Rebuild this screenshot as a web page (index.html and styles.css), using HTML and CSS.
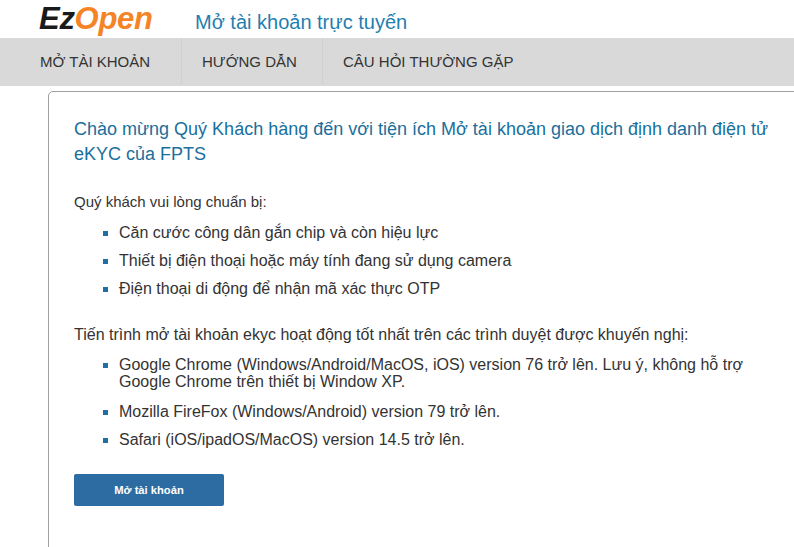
FILE: index.html
```html
<!DOCTYPE html>
<html lang="vi">
<head>
    <meta charset="UTF-8">
    <meta name="viewport" content="width=device-width, initial-scale=1.0">
    <title>Mở tài khoản trực tuyến</title>
    <link rel="stylesheet" href="styles.css">
</head>
<body>
    <div class="header">
        <div class="logo"><span class="logo-dark">Ez</span><span class="logo-orange">Open</span></div>
        <div class="site-title">Mở tài khoản trực tuyến</div>
    </div>

    <div class="nav">
        <a class="nav-item nav-first">MỞ TÀI KHOẢN</a>
        <a class="nav-item nav-second">HƯỚNG DẪN</a>
        <a class="nav-item nav-third">CÂU HỎI THƯỜNG GẶP</a>
    </div>

    <div class="card">
        <h2 class="card-title">Chào mừng Quý Khách hàng đến với tiện ích Mở tài khoản giao dịch định danh điện tử eKYC của FPTS</h2>

        <p class="intro">Quý khách vui lòng chuẩn bị:</p>
        <ul class="list list-prepare">
            <li>Căn cước công dân gắn chip và còn hiệu lực</li>
            <li>Thiết bị điện thoại hoặc máy tính đang sử dụng camera</li>
            <li>Điện thoại di động để nhận mã xác thực OTP</li>
        </ul>

        <p class="intro intro-browsers">Tiến trình mở tài khoản ekyc hoạt động tốt nhất trên các trình duyệt được khuyến nghị:</p>
        <ul class="list list-browsers">
            <li>Google Chrome (Windows/Android/MacOS, iOS) version 76 trở lên. Lưu ý, không hỗ trợ Google Chrome trên thiết bị Window XP.</li>
            <li>Mozilla FireFox (Windows/Android) version 79 trở lên.</li>
            <li>Safari (iOS/ipadOS/MacOS) version 14.5 trở lên.</li>
        </ul>

        <button class="open-button">Mở tài khoản</button>
    </div>
</body>
</html>
```

FILE: styles.css
```css
* {
    margin: 0;
    padding: 0;
    box-sizing: border-box;
    font-family: "Liberation Sans", Arial, sans-serif;
}

html, body {
    height: 547px;
    overflow: hidden;
}

body {
    background-color: #ffffff;
    color: #333333;
    font-size: 15px;
}

.header {
    display: flex;
    align-items: center;
    height: 38px;
    padding-left: 39px;
}

.logo {
    width: 156px;
    font-size: 31px;
    font-weight: bold;
    font-style: italic;
    letter-spacing: -0.3px;
}

.logo-dark { color: #1a1a1a; }
.logo-orange { color: #f58426; }

.site-title {
    color: #1f7fb0;
    font-size: 20px;
    margin-top: 6px;
}

.nav {
    display: flex;
    height: 48px;
    padding-bottom: 2px;
    background-color: #d9d9d9;
}

.nav-item {
    display: flex;
    align-items: center;
    color: #333333;
    font-size: 15px;
    border-right: 1px solid #d0d0d0;
}

.nav-first {
    width: 182px;
    padding-left: 40px;
}

.nav-second {
    width: 141px;
    padding-left: 20px;
}

.nav-third {
    padding-left: 20px;
    border-right: none;
}

.card {
    width: 780px;
    height: 480px;
    margin: 5px 0 0 48px;
    padding: 25px 0 0 25px;
    border: 1px solid #a0a0a0;
    border-radius: 5px;
}

.card-title {
    color: #1a6f9c;
    font-size: 18px;
    font-weight: normal;
    line-height: 25px;
    width: 700px;
    margin-bottom: 25px;
}

.intro {
    line-height: 20px;
}

.intro-browsers {
    margin-top: 27px;
    font-size: 16px;
}

.list {
    list-style: none;
    margin-left: 45px;
    width: 635px;
    font-size: 16px;
}

.list li {
    position: relative;
    line-height: 18px;
}

.list li::before {
    content: "";
    position: absolute;
    left: -16px;
    top: 7px;
    width: 5px;
    height: 5px;
    background-color: #1f6fa3;
}

.list-prepare {
    margin-top: 12px;
}

.list-prepare li {
    margin-bottom: 10px;
}

.list-browsers {
    margin-top: 11px;
}

.list-browsers li {
    line-height: 17px;
    margin-bottom: 11px;
}

.list-browsers li:first-child {
    margin-bottom: 13px;
}

.open-button {
    display: block;
    width: 150px;
    height: 32px;
    margin-top: 26px;
    background-color: #2d6ca2;
    color: #ffffff;
    font-size: 11.2px;
    font-weight: bold;
    border: none;
    border-radius: 2px;
}
```
